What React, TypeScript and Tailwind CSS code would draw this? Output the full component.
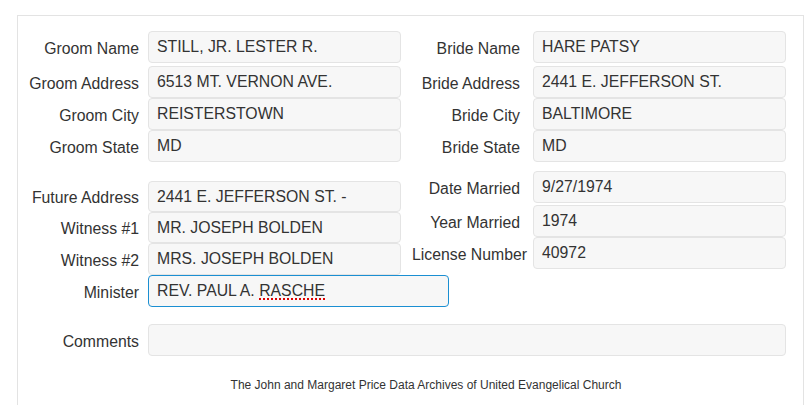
import React from "react";

const font = { fontFamily: '"Liberation Sans", Arial, sans-serif' };

function Field({
  value,
  w = "w-[253px]",
  h = "h-[32px]",
  focus = false,
  children,
}: {
  value?: string;
  w?: string;
  h?: string;
  focus?: boolean;
  children?: React.ReactNode;
}) {
  return (
    <div
      className={`${w} ${h} flex items-center pl-[8px] rounded-[4px] border bg-[#f7f7f7] whitespace-nowrap ${
        focus ? "border-[#1b8fd2]" : "border-[#e4e4e4]"
      }`}
    >
      {children ?? value}
    </div>
  );
}

function LeftRow({
  label,
  value,
  h,
  className = "",
  w,
  focus,
  children,
}: {
  label: string;
  value?: string;
  h?: string;
  className?: string;
  w?: string;
  focus?: boolean;
  children?: React.ReactNode;
}) {
  return (
    <div className={`flex items-center ${className}`}>
      <div className="w-[130px] pr-[9px] pt-[3px] text-right whitespace-nowrap">{label}</div>
      <Field value={value} h={h} w={w} focus={focus}>
        {children}
      </Field>
    </div>
  );
}

function RightRow({
  label,
  value,
  h,
  className = "",
}: {
  label: string;
  value: string;
  h?: string;
  className?: string;
}) {
  return (
    <div className={`flex items-center ${className}`}>
      <div className="w-[132px] pl-[11px] pr-[13px] pt-[3px] text-right whitespace-nowrap">{label}</div>
      <Field value={value} h={h} />
    </div>
  );
}

export default function App() {
  return (
    <div className="w-[805px] h-[405px] overflow-hidden bg-white text-[#333] text-[15.8px]" style={font}>
      <div className="ml-[17px] mt-[15px] w-[787px] border border-[#e3e3e3] pt-[15px] pb-[40px]">
        {/* Section 1 */}
        <div className="flex">
          <div className="flex flex-col">
            <LeftRow label="Groom Name" value="STILL, JR. LESTER R." />
            <LeftRow label="Groom Address" value="6513 MT. VERNON AVE." className="mt-[3px]" />
            <LeftRow label="Groom City" value="REISTERSTOWN" />
            <LeftRow label="Groom State" value="MD" />
          </div>
          <div className="flex flex-col">
            <RightRow label="Bride Name" value="HARE PATSY" />
            <RightRow label="Bride Address" value="2441 E. JEFFERSON ST." className="mt-[3px]" />
            <RightRow label="Bride City" value="BALTIMORE" />
            <RightRow label="Bride State" value="MD" />
          </div>
        </div>

        {/* Section 2 */}
        <div className="flex items-start">
          <div className="flex flex-col mt-[19px]">
            <LeftRow label="Future Address" value="2441 E. JEFFERSON ST. -" h="h-[31px]" />
            <LeftRow label="Witness #1" value="MR. JOSEPH BOLDEN" h="h-[31px]" />
            <LeftRow label="Witness #2" value="MRS. JOSEPH BOLDEN" />
            <LeftRow label="Minister" w="w-[301px]" focus>
              <span>
                REV. PAUL A.{" "}
                <span className="underline decoration-dotted decoration-[#d00] decoration-[1.5px] underline-offset-[2px]">
                  RASCHE
                </span>
              </span>
            </LeftRow>
          </div>
          <div className="flex flex-col mt-[9px] -ml-[48px]">
            <RightRow label="Date Married" value="9/27/1974" />
            <RightRow label="Year Married" value="1974" className="mt-[2px]" />
            <RightRow label="License Number" value="40972" />
          </div>
        </div>

        {/* Comments */}
        <div className="mt-[17px]">
          <LeftRow label="Comments" value="" w="w-[638px]" />
        </div>

        {/* Footer */}
        <div className="mt-[22px] pl-[31px] text-center text-[12px] leading-[14px]">
          The John and Margaret Price Data Archives of United Evangelical Church
        </div>
      </div>
    </div>
  );
}
